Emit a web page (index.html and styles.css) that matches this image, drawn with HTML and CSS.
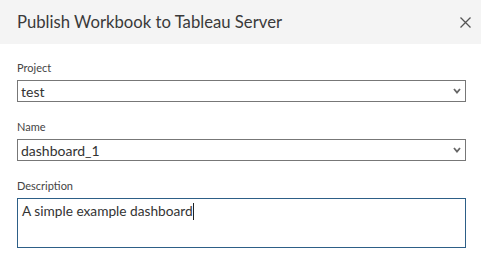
FILE: index.html
```html
<!DOCTYPE html>
<html lang="en">

<head>
    <meta charset="UTF-8">
    <meta name="viewport" content="width=device-width, initial-scale=1.0">
    <title>Publish Workbook</title>
    <link rel="stylesheet" href="styles.css">
</head>

<body>
    <div class="dialog">
        <header class="dialog-header">
            <h1 class="dialog-title">Publish Workbook to Tableau Server</h1>
            <button class="close-btn" aria-label="Close">
                <svg width="11" height="11" viewBox="0 0 11 11">
                    <path d="M0.5 0.5 L10.5 10.5 M10.5 0.5 L0.5 10.5" stroke="#555" stroke-width="1.3" fill="none" />
                </svg>
            </button>
        </header>
        <main class="dialog-body">
            <div class="field">
                <label class="field-label">Project</label>
                <div class="select-box">
                    <span class="select-value">test</span>
                    <svg class="chevron" width="8" height="6" viewBox="0 0 8 6">
                        <path d="M1 1 L4 4.5 L7 1" stroke="#666" stroke-width="1.8" fill="none" />
                    </svg>
                </div>
            </div>
            <div class="field">
                <label class="field-label">Name</label>
                <div class="select-box">
                    <span class="select-value">dashboard_1</span>
                    <svg class="chevron" width="8" height="6" viewBox="0 0 8 6">
                        <path d="M1 1 L4 4.5 L7 1" stroke="#666" stroke-width="1.8" fill="none" />
                    </svg>
                </div>
            </div>
            <div class="field">
                <label class="field-label">Description</label>
                <div class="text-area">A simple example dashboard<span class="caret"></span></div>
            </div>
        </main>
    </div>
</body>

</html>
```

FILE: styles.css
```css
* {
    box-sizing: border-box;
    margin: 0;
    padding: 0;
}

body {
    font-family: "Lato", "Open Sans", sans-serif;
    background: #fff;
    color: #333;
}

.dialog-header {
    height: 44px;
    background-color: #f4f4f4;
    display: flex;
    align-items: center;
    justify-content: space-between;
    padding: 0 10px 0 17px;
}

.dialog-title {
    font-size: 16.7px;
    font-weight: normal;
    color: #3a3a3a;
}

.close-btn {
    background: none;
    border: none;
    width: 11px;
    height: 11px;
    display: flex;
    margin-top: 1px;
}

.dialog-body {
    padding: 17px 15px 0 17px;
}

.field {
    margin-bottom: 18px;
}

.field-label {
    display: block;
    font-size: 11px;
    line-height: 14px;
    color: #444;
    margin-bottom: 5px;
}

.select-box {
    height: 22px;
    border: 1px solid #777;
    display: flex;
    align-items: center;
    justify-content: space-between;
    padding: 0 4px 0 3px;
}

.select-value {
    font-size: 14px;
    color: #333;
}

.chevron {
    display: block;
}

.text-area {
    height: 50px;
    border: 1px solid #2d5f87;
    padding: 3px 4px;
    font-size: 13.7px;
    line-height: 18px;
    color: #333;
}

.caret {
    display: inline-block;
    width: 1px;
    height: 17px;
    background-color: #222;
    vertical-align: -4px;
}
```
